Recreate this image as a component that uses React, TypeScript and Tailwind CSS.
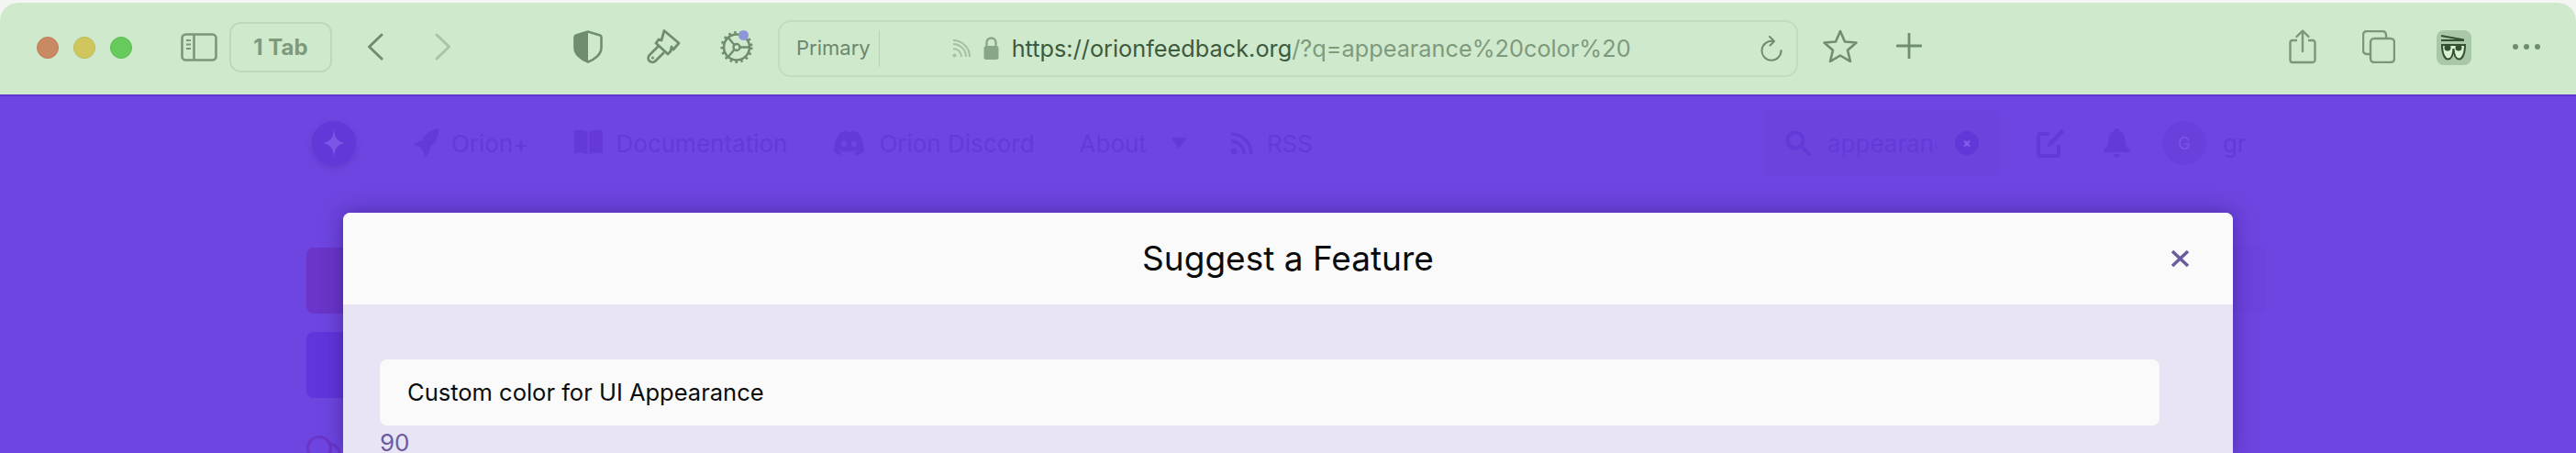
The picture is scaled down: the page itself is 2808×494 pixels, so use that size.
import React from "react";

const G = "#7b977b";

function Svg({ w, h, vb, className, children }: { w: number; h: number; vb: string; className?: string; children: React.ReactNode }) {
  return (
    <svg width={w} height={h} viewBox={vb} fill="none" className={`shrink-0 ${className ?? ""}`}>
      {children}
    </svg>
  );
}

function Toolbar() {
  return (
    <div className="h-[100px] shrink-0 bg-[#cfe9cd] rounded-t-[20px] flex items-center text-[#7b977b]">
      <div className="ml-[40px] flex gap-[16px] mb-[2px]">
        <div className="w-[24px] h-[24px] rounded-full bg-[#c98a63] border border-[#bd7f58]" />
        <div className="w-[24px] h-[24px] rounded-full bg-[#cfc65e] border border-[#c2b950]" />
        <div className="w-[24px] h-[24px] rounded-full bg-[#66cb5a] border border-[#5abf4e]" />
      </div>
      <Svg w={40} h={31} vb="0 0 40 31" className="ml-[53px] mb-[4px]">
        <rect x="1.500" y="1.500" width="37" height="28" rx="4" stroke={G} strokeWidth="2.600" />
        <path d="M14.500 1.500v28" stroke={G} strokeWidth="2.600" />
        <path d="M6 8h5M6 12.500h5M6 17h5" stroke={G} strokeWidth="2" />
      </Svg>
      <div className="ml-[13px] w-[112px] h-[55px] mb-[3px] rounded-[12px] border-2 border-[#bdd8bc] flex items-center justify-center font-['Inter',sans-serif] font-bold text-[24px] text-[#7e9a7d]">
        1 Tab
      </div>
      <Svg w={18} h={30} vb="0 0 18 30" className="ml-[38px] mb-[4px]">
        <path d="M16 2 2.500 15 16 28" stroke="#6f8d6f" strokeWidth="3" strokeLinecap="round" strokeLinejoin="round" />
      </Svg>
      <Svg w={18} h={30} vb="0 0 18 30" className="ml-[56px] mb-[4px]">
        <path d="M2 2l13.500 13L2 28" stroke="#a9c4a8" strokeWidth="3" strokeLinecap="round" strokeLinejoin="round" />
      </Svg>
      <Svg w={32} h={36} vb="0 0 32 36" className="ml-[133px] mb-[5px]">
        <path d="M16 1.500 3 5.500c-1 .3-1.500 1-1.500 2V19c0 7 7 13 14.500 15.500 7.500-2.500 14.500-8.500 14.500-15.500V7.500c0-1-.5-1.700-1.500-2Z" stroke="#6f8d6f" strokeWidth="2.600" />
        <path d="M16 1.500 3 5.500c-1 .3-1.500 1-1.500 2V19c0 7 7 13 14.500 15.500Z" fill="#6f8d6f" />
      </Svg>
      <Svg w={37} h={39} vb="0 0 37 39" className="ml-[48px] mb-[4px]">
        <path d="M19 1.500 35 15l-6 7-2-3-1 5-3 3-13-12 3-4 3 1Z" stroke="#6f8d6f" strokeWidth="2.800" strokeLinejoin="round" />
        <path d="M12.500 18.500 3 28a4.500 4.500 0 0 0 6.500 6.500L19 25" stroke="#6f8d6f" strokeWidth="2.800" strokeLinejoin="round" />
        <circle cx="6.500" cy="31" r="1.600" fill="#6f8d6f" />
      </Svg>
      <div className="relative ml-[43px] mb-[4px] w-[37px] h-[37px] shrink-0">
        <Svg w={37} h={37} vb="0 0 37 37">
          <circle cx="18" cy="18.500" r="14" stroke="#6f8d6f" strokeWidth="2.600" />
          <circle cx="18" cy="18.500" r="3.500" stroke="#6f8d6f" strokeWidth="2.400" />
          <path d="M21.500 18.500H33M15.500 21 8 30M15.500 16 8 7" stroke="#6f8d6f" strokeWidth="2.400" />
          <circle cx="18" cy="18.500" r="16" stroke="#6f8d6f" strokeWidth="3" strokeDasharray="2.500 3.500" />
        </Svg>
        <div className="absolute left-[20px] top-0 w-[11px] h-[11px] rounded-full bg-[#8f96d8]" />
      </div>
      <div className="ml-[26px] w-[1112px] h-[62px] mb-[1px] rounded-[14px] border-2 border-[#c2dcc1] flex items-center font-['Inter',sans-serif] shrink-0">
        <span className="ml-[18px] text-[22px] text-[#6d876c]">Primary</span>
        <div className="ml-[9px] w-px h-[40px] bg-[#b7d2b6]" />
        <Svg w={20} h={20} vb="0 0 20 20" className="ml-[79px]">
          <circle cx="2.500" cy="17.500" r="2" fill="#a5bfa4" />
          <path d="M1 10a9 9 0 0 1 9 9M1 5a14 14 0 0 1 14 14M1 1a18 18 0 0 1 18 18" stroke="#a5bfa4" strokeWidth="2" />
        </Svg>
        <Svg w={17} h={25} vb="0 0 17 25" className="ml-[14px]">
          <path d="M3.500 11V6.500a5 5 0 0 1 10 0V11" stroke="#8aa689" strokeWidth="2.400" />
          <rect x="0.500" y="10" width="16" height="15" rx="2.500" fill="#8aa689" />
        </Svg>
        <span className="ml-[14px] text-[25.300px] whitespace-nowrap text-[#3d5a3d]">
          https://orionfeedback.org<span className="text-[#7e9a7d]">/?q=appearance%20color%20</span>
        </span>
        <Svg w={24} h={28} vb="0 0 24 28" className="ml-auto mr-[15px]">
          <path d="M14 6A10.500 10.500 0 1 0 22.500 16" stroke="#6f8d6f" strokeWidth="2" strokeLinecap="round" />
          <path d="M10 1l5 5-4.500 4.500" stroke="#6f8d6f" strokeWidth="2" strokeLinecap="round" strokeLinejoin="round" />
        </Svg>
      </div>
      <Svg w={38} h={36} vb="0 0 38 36" className="ml-[27px] mb-[7px]">
        <path d="M19 2l5 11.500 12.500 1-9.500 8.300 3 12.200L19 28.500 8 35l3-12.200L1.500 14.500l12.500-1Z" stroke="#6f8d6f" strokeWidth="2.600" strokeLinejoin="round" />
      </Svg>
      <Svg w={28} h={28} vb="0 0 28 28" className="ml-[42px] mb-[6px]">
        <path d="M14 1v26M1 14h26" stroke="#6f8d6f" strokeWidth="2.800" strokeLinecap="round" />
      </Svg>
      <Svg w={30} h={38} vb="0 0 30 38" className="ml-[400px] mb-[5px]">
        <path d="M9 12H4a2.500 2.500 0 0 0-2.500 2.500v19A2.500 2.500 0 0 0 4 36h22a2.500 2.500 0 0 0 2.500-2.500v-19A2.500 2.500 0 0 0 26 12h-5" stroke="#7b977b" strokeWidth="2.400" />
        <path d="M15 24V2M8.500 8 15 1.500 21.500 8" stroke="#7b977b" strokeWidth="2.400" strokeLinecap="round" strokeLinejoin="round" />
      </Svg>
      <Svg w={36} h={36} vb="0 0 36 36" className="ml-[50px] mb-[5px]">
        <path d="M8 26H5a4 4 0 0 1-4-4V5a4 4 0 0 1 4-4h17a4 4 0 0 1 4 4v3" stroke="#7b977b" strokeWidth="2.400" />
        <rect x="9" y="9" width="26" height="26" rx="4" stroke="#7b977b" strokeWidth="2.400" />
      </Svg>
      <div className="ml-[45px] mb-[2px] w-[38px] h-[38px] rounded-[8px] bg-[#a9c8a8] shrink-0">
        <Svg w={38} h={38} vb="0 0 38 38">
          <path d="M5 6 30 10.500M5 11h25" stroke="#33502f" strokeWidth="1.800" />
          <path d="M5 15h26v3.500H5Z" fill="#33502f" />
          <path d="M6 16c0 10 3 15.500 6.500 15.500S18 27 18.500 20c.5 7 2.500 11.500 6 11.500S31 26 31 16Z" fill="#d7f0d2" stroke="#33502f" strokeWidth="2" />
          <circle cx="12" cy="19" r="3.500" fill="#33502f" />
          <circle cx="24" cy="19" r="3.500" fill="#33502f" />
        </Svg>
      </div>
      <div className="ml-[45px] mb-[4px] flex gap-[6px]">
        <div className="w-[6px] h-[6px] rounded-full bg-[#6f8d6f]" />
        <div className="w-[6px] h-[6px] rounded-full bg-[#6f8d6f]" />
        <div className="w-[6px] h-[6px] rounded-full bg-[#6f8d6f]" />
      </div>
    </div>
  );
}

const D = "#6539d8";

function NavBar() {
  return (
    <div className="h-[72px] mt-[15px] shrink-0 flex items-center font-['Inter',sans-serif] text-[26px] text-[#6539d8] whitespace-nowrap">
      <div className="ml-[340px] w-[48px] h-[48px] rounded-full bg-[#6338d9] shadow-[0_3px_6px_rgba(60,30,150,0.25)] shrink-0 flex items-center justify-center">
        <Svg w={24} h={30} vb="0 0 24 30">
          <path d="M12 0c1 9 3 13 12 15-9 2-11 6-12 15-1-9-3-13-12-15C9 13 11 9 12 0Z" fill="#7b55e6" />
        </Svg>
      </div>
      <Svg w={28} h={32} vb="0 0 28 32" className="ml-[62px]">
        <path d="M28 0c-8 1-14 5-18 13l-3 1-7 4 7 2 4 4 3 8 4-6 1-6c7-5 9-11 9-20Z" fill={D} />
      </Svg>
      <span className="ml-[14px]">Orion+</span>
      <Svg w={31} h={30} vb="0 0 31 30" className="ml-[49px]">
        <path d="M0 2c5-2 10-2 14.500 1v25C10 25 5 25 0 27ZM31 2c-5-2-10-2-14.500 1v25C21 25 26 25 31 27Z" fill={D} />
      </Svg>
      <span className="ml-[15px]">Documentation</span>
      <Svg w={33} h={28} vb="0 0 33 28" className="ml-[51px]">
        <path d="M6 3c3-1.500 6-2.500 8-2.500L15 2.500h3L19 .5c2 0 5 1 8 2.500 4 6 6 13 6 20-3 2.500-6 4-8.500 4.500l-2-3.500 3-1.500-1-1c-6 3-12 3-18 0l-1 1 3 1.500-2 3.500C6 27 3 25.500 0 23 0 16 2 9 6 3Z" fill={D} />
        <ellipse cx="11" cy="15" rx="3" ry="3.500" fill="#6e45e0" />
        <ellipse cx="22" cy="15" rx="3" ry="3.500" fill="#6e45e0" />
      </Svg>
      <span className="ml-[16px]">Orion Discord</span>
      <span className="ml-[49px]">About</span>
      <Svg w={18} h={12} vb="0 0 20 14" className="ml-[26px]">
        <path d="M0 0h20L10 14Z" fill={D} />
      </Svg>
      <Svg w={25} h={25} vb="0 0 25 25" className="ml-[47px]">
        <circle cx="4" cy="21" r="3.500" fill={D} />
        <path d="M1 10a14 14 0 0 1 14 14M1 2a22 22 0 0 1 22 22" stroke={D} strokeWidth="3.500" />
      </Svg>
      <span className="ml-[15px]">RSS</span>
      <div className="ml-[493px] w-[255px] h-[73px] rounded-[8px] bg-[#6c43dd] flex items-center shrink-0">
        <Svg w={28} h={28} vb="0 0 28 28" className="ml-[22px]">
          <circle cx="11" cy="11" r="8.500" stroke={D} strokeWidth="4" />
          <path d="M17 17l9 9" stroke={D} strokeWidth="4" strokeLinecap="round" />
        </Svg>
        <input readOnly value="appearance color" className="ml-[18px] w-[119px] bg-transparent outline-none text-[#6539d8]" />
        <div className="ml-[20px] w-[26px] h-[26px] rounded-full bg-[#6338d9] shrink-0 flex items-center justify-center">
          <span className="text-[#8562e8] text-[14px] font-bold leading-none">×</span>
        </div>
      </div>
      <Svg w={30} h={32} vb="0 0 30 32" className="ml-[41px]">
        <path d="M14 6H4a2 2 0 0 0-2 2v20a2 2 0 0 0 2 2h18a2 2 0 0 0 2-2V18" stroke={D} strokeWidth="4" />
        <path d="M27 1l3 3-13 14-6 3 2-6Z" fill={D} />
      </Svg>
      <Svg w={29} h={32} vb="0 0 29 32" className="ml-[43px]">
        <path d="M14.500 0c2 0 3 1 3 3 5 1.500 6 6 6 10 0 5 2 8 5.500 11v2H0v-2c3.500-3 5.500-6 5.500-11 0-4 1-8.500 6-10 0-2 1-3 3-3ZM11 28h7c0 2-1.500 4-3.500 4S11 30 11 28Z" fill={D} />
      </Svg>
      <div className="ml-[35px] w-[48px] h-[48px] rounded-full bg-[#6a40dc] shrink-0 flex items-center justify-center text-[18px] text-[#7b55e6]">G</div>
      <span className="ml-[18px]">gr</span>
    </div>
  );
}

function Modal() {
  return (
    <div className="absolute left-[374px] top-[232px] w-[2060px] h-[262px] rounded-t-[8px] overflow-hidden bg-[#e8e4f5] font-['Inter',sans-serif]">
      <div className="h-[100px] bg-[#fafafa] relative flex items-center justify-center">
        <h2 className="text-[37px] text-[#0a0a0a] font-normal">Suggest a Feature</h2>
        <Svg w={21} h={20} vb="0 0 21 20" className="absolute right-[47px] top-[40px]">
          <path d="M2 2l17 16M19 2 2 18" stroke="#6b5b9e" strokeWidth="3.500" />
        </Svg>
      </div>
      <div className="pt-[60px] pl-[40px] pr-[80px]">
        <div className="h-[72px] rounded-[8px] bg-[#fafafa] flex items-center pl-[30px] text-[25.500px] text-[#0a0a0a]">
          Custom color for UI Appearance
        </div>
        <div className="mt-[9px] text-[26px] leading-[20px] text-[#6b5b9e]">90</div>
      </div>
    </div>
  );
}

export default function App() {
  return (
    <div className="relative w-[2808px] h-[494px] overflow-hidden bg-[#f4f6f4] pt-[3px]">
      <Toolbar />
      <div className="h-[391px] bg-[#6e45e0] border-t-2 border-[#5f35cf] flex flex-col">
        <NavBar />
        <div className="ml-[334px] mt-[78px] w-[100px] h-[72px] shrink-0 rounded-[8px] bg-[#6a35c8]" />
        <div className="ml-[334px] mt-[20px] w-[100px] h-[72px] shrink-0 rounded-[8px] bg-[#6035dc]" />
        <Svg w={40} h={30} vb="0 0 40 30" className="ml-[334px] mt-[40px]">
          <circle cx="14" cy="15" r="12.500" stroke="#6a35c8" strokeWidth="3" />
          <path d="M26 10c6 1 10 5 10 12" stroke="#6a35c8" strokeWidth="3" />
        </Svg>
      </div>
      <div className="absolute left-[2380px] top-[268px] w-[90px] h-[73px] rounded-[8px] bg-[#6c43dd]" />
      <div className="absolute left-[374px] top-[232px] w-[2060px] h-[262px] rounded-t-[8px] shadow-[0_0_22px_rgba(40,20,110,0.5)]" />
      <Modal />
    </div>
  );
}
